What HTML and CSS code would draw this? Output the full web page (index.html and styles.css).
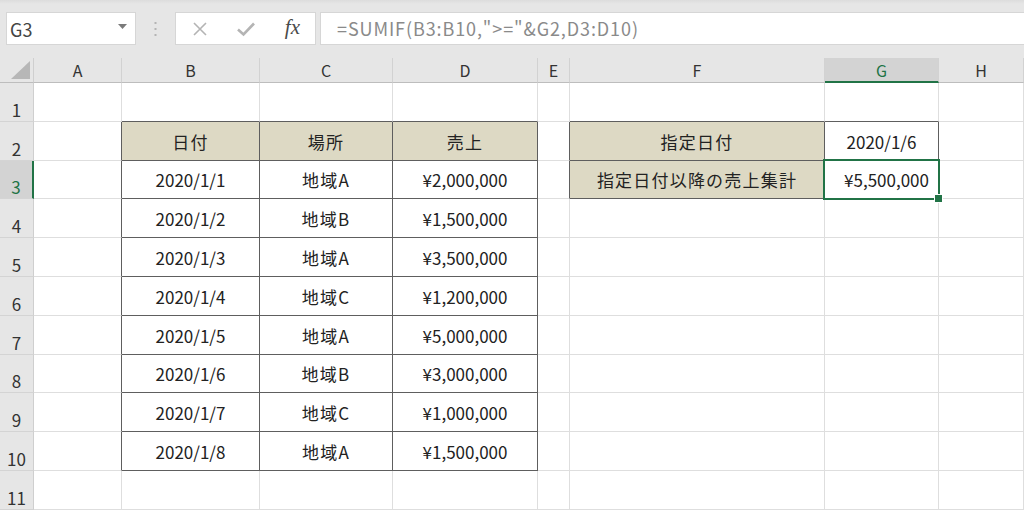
FILE: index.html
```html
<!DOCTYPE html>
<html lang="ja">

<head>
    <meta charset="UTF-8">
    <title>SUMIF</title>
    <link rel="stylesheet" href="styles.css">
</head>

<body>
    <div class="toolbar">
        <div class="namebox">
            <span>G3</span>
            <svg class="caret" width="9" height="5" viewBox="0 0 9 5"><path d="M0 0h9L4.5 5z" fill="#7a7a7a"/></svg>
        </div>
        <div class="grip">
            <svg width="3" height="14" viewBox="0 0 3 14"><rect x="0.5" y="0" width="2" height="2" fill="#b4b4b4"/><rect x="0.5" y="6" width="2" height="2" fill="#b4b4b4"/><rect x="0.5" y="12" width="2" height="2" fill="#b4b4b4"/></svg>
        </div>
        <div class="fbuttons">
            <svg width="16" height="16" viewBox="0 0 16 16"><path d="M2 2L14 14M14 2L2 14" stroke="#b4b4b4" stroke-width="1.6" fill="none"/></svg>
            <svg width="20" height="16" viewBox="0 0 20 16"><path d="M2 8.5L7.5 13.5L18 2.5" stroke="#b4b4b4" stroke-width="2.6" fill="none"/></svg>
            <span class="fx">fx</span>
        </div>
        <div class="formula">=SUMIF(B3:B10,"&gt;="&amp;G2,D3:D10)</div>
    </div>

    <div class="sheet">
        <div class="corner"></div>
        <div class="ch">A</div>
        <div class="ch">B</div>
        <div class="ch">C</div>
        <div class="ch">D</div>
        <div class="ch">E</div>
        <div class="ch">F</div>
        <div class="ch sel">G</div>
        <div class="ch">H</div>

        <!-- 1 -->
        <div class="rh">1</div>
        <div class="c"></div>
        <div class="c eb"></div>
        <div class="c eb"></div>
        <div class="c eb"></div>
        <div class="c"></div>
        <div class="c eb"></div>
        <div class="c eb"></div>
        <div class="c"></div>

        <!-- 2 -->
        <div class="rh">2</div>
        <div class="c er"></div>
        <div class="c t th">日付</div>
        <div class="c t th">場所</div>
        <div class="c t th">売上</div>
        <div class="c er"></div>
        <div class="c t th">指定日付</div>
        <div class="c t">2020/1/6</div>
        <div class="c"></div>

        <!-- 3 -->
        <div class="rh sel">3</div>
        <div class="c er"></div>
        <div class="c t">2020/1/1</div>
        <div class="c t jp">地域A</div>
        <div class="c t">¥2,000,000</div>
        <div class="c er"></div>
        <div class="c t th">指定日付以降の売上集計</div>
        <div class="c t num active">¥5,500,000</div>
        <div class="c"></div>

        <!-- 4 -->
        <div class="rh">4</div>
        <div class="c er"></div>
        <div class="c t">2020/1/2</div>
        <div class="c t jp">地域B</div>
        <div class="c t">¥1,500,000</div>
        <div class="c"></div>
        <div class="c"></div>
        <div class="c"></div>
        <div class="c"></div>

        <!-- 5 -->
        <div class="rh">5</div>
        <div class="c er"></div>
        <div class="c t">2020/1/3</div>
        <div class="c t jp">地域A</div>
        <div class="c t">¥3,500,000</div>
        <div class="c"></div>
        <div class="c"></div>
        <div class="c"></div>
        <div class="c"></div>

        <!-- 6 -->
        <div class="rh">6</div>
        <div class="c er"></div>
        <div class="c t">2020/1/4</div>
        <div class="c t jp">地域C</div>
        <div class="c t">¥1,200,000</div>
        <div class="c"></div>
        <div class="c"></div>
        <div class="c"></div>
        <div class="c"></div>

        <!-- 7 -->
        <div class="rh">7</div>
        <div class="c er"></div>
        <div class="c t">2020/1/5</div>
        <div class="c t jp">地域A</div>
        <div class="c t">¥5,000,000</div>
        <div class="c"></div>
        <div class="c"></div>
        <div class="c"></div>
        <div class="c"></div>

        <!-- 8 -->
        <div class="rh">8</div>
        <div class="c er"></div>
        <div class="c t">2020/1/6</div>
        <div class="c t jp">地域B</div>
        <div class="c t">¥3,000,000</div>
        <div class="c"></div>
        <div class="c"></div>
        <div class="c"></div>
        <div class="c"></div>

        <!-- 9 -->
        <div class="rh">9</div>
        <div class="c er"></div>
        <div class="c t">2020/1/7</div>
        <div class="c t jp">地域C</div>
        <div class="c t">¥1,000,000</div>
        <div class="c"></div>
        <div class="c"></div>
        <div class="c"></div>
        <div class="c"></div>

        <!-- 10 -->
        <div class="rh">10</div>
        <div class="c er"></div>
        <div class="c t">2020/1/8</div>
        <div class="c t jp">地域A</div>
        <div class="c t">¥1,500,000</div>
        <div class="c"></div>
        <div class="c"></div>
        <div class="c"></div>
        <div class="c"></div>

        <!-- 11 -->
        <div class="rh">11</div>
        <div class="c"></div>
        <div class="c"></div>
        <div class="c"></div>
        <div class="c"></div>
        <div class="c"></div>
        <div class="c"></div>
        <div class="c"></div>
        <div class="c"></div>
    </div>
</body>

</html>
```

FILE: styles.css
```css
* {
    box-sizing: border-box;
}

body {
    margin: 0;
    width: 1024px;
    height: 511px;
    overflow: hidden;
    background: #fff;
    font-family: "Noto Sans CJK JP", sans-serif;
    color: #222;
}

/* formula bar */
.toolbar {
    display: flex;
    align-items: flex-start;
    height: 58px;
    padding: 12px 0 0 6px;
    background: linear-gradient(#dcdcdc, #e6e6e6 4px);
}

.namebox {
    display: flex;
    align-items: center;
    justify-content: space-between;
    width: 130px;
    height: 33px;
    padding: 0 8px 0 3px;
    background: #fff;
    border: 1px solid #d6d6d6;
    font-size: 18px;
    color: #444;
}

.caret {
    margin-top: -4px;
}

.grip {
    display: flex;
    justify-content: center;
    width: 39px;
    padding-top: 10px;
}

.fbuttons {
    display: flex;
    align-items: center;
    justify-content: space-between;
    width: 141px;
    height: 33px;
    padding: 0 15px 0 16px;
    background: #fff;
    border: 1px solid #d6d6d6;
}

.fx {
    font-family: "Liberation Serif", serif;
    font-style: italic;
    font-size: 21px;
    color: #4a4a4a;
    margin-top: -3px;
}

.formula {
    flex: 1;
    height: 33px;
    margin-left: 4px;
    padding-left: 16px;
    background: #fff;
    border: 1px solid #d6d6d6;
    border-right: 0;
    font-size: 18px;
    letter-spacing: 0.9px;
    line-height: 30px;
    color: #8a8a8a;
}

/* grid */
.sheet {
    display: grid;
    grid-template-columns: 34px 88px 138px 133px 145px 32px 255px 114px 1fr;
    grid-template-rows: 25px repeat(11, 38.8px);
    font-size: 17px;
}

.corner {
    position: relative;
    background: #e6e6e6;
    border-right: 1px solid #cfcfcf;
    border-bottom: 1px solid #bdbdbd;
}

.corner::after {
    content: "";
    position: absolute;
    right: 3px;
    bottom: 3px;
    border-left: 19px solid transparent;
    border-bottom: 18px solid #b7b7b7;
}

.ch {
    display: flex;
    align-items: center;
    justify-content: center;
    background: #e6e6e6;
    border-right: 1px solid #d2d2d2;
    border-bottom: 1px solid #bdbdbd;
    font-size: 16px;
    color: #333;
}

.ch.sel {
    background: #d3d3d3;
    color: #217346;
    border-bottom: 2px solid #217346;
}

.rh {
    display: flex;
    align-items: flex-end;
    justify-content: center;
    padding-bottom: 3px;
    background: #e6e6e6;
    border-right: 1px solid #cfcfcf;
    border-bottom: 1px solid #d4d4d4;
    font-size: 17px;
    line-height: 1;
    color: #333;
}

.rh.sel {
    background: #d3d3d3;
    color: #217346;
    border-right: 2px solid #217346;
}

.c {
    border-right: 1px solid #dedede;
    border-bottom: 1px solid #dedede;
}

.t {
    display: flex;
    align-items: center;
    justify-content: center;
    border-color: #5e5e5e;
    padding-top: 1px;
}

.th,
.jp {
    letter-spacing: 1.2px;
}

.th {
    background: #ddd9c4;
}

.eb {
    border-bottom-color: #5e5e5e;
}

.er {
    border-right-color: #5e5e5e;
}

.num {
    justify-content: flex-end;
    padding-right: 9px;
}

.active {
    position: relative;
}

.active::before {
    content: "";
    position: absolute;
    top: -2px;
    left: -2px;
    right: -2px;
    bottom: -2px;
    border: 2px solid #217346;
}

.active::after {
    content: "";
    position: absolute;
    right: -5px;
    bottom: -5px;
    width: 7px;
    height: 7px;
    background: #217346;
    border: 1px solid #fff;
}
```
